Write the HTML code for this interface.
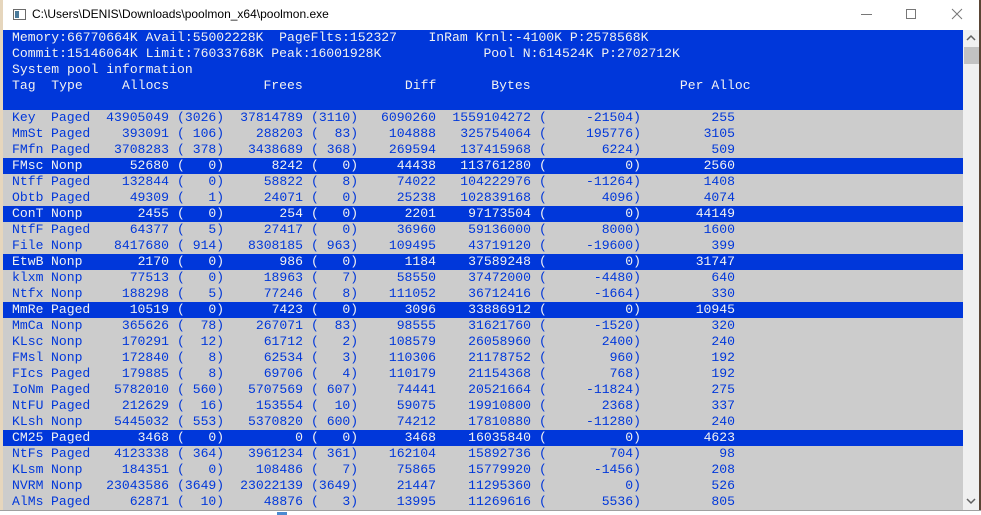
<!DOCTYPE html>
<html><head><meta charset="utf-8"><style>
*{margin:0;padding:0;box-sizing:border-box}
html,body{width:981px;height:515px;overflow:hidden;background:#f4f4f4;position:relative}
#left{position:absolute;left:0;top:0;width:3px;height:515px;background:#e6d6bd}
#rightedge{position:absolute;left:979px;top:0;width:2px;height:515px;background:#5a4535}
#title{position:absolute;left:3px;top:0;width:976px;height:30px;background:#fff}
#title .t{position:absolute;left:29px;top:7px;font:12px "Liberation Sans",sans-serif;color:#000}
#icon{position:absolute;left:10px;top:9px;width:13px;height:11px;border:1px solid #6a6a6a;background:#fff}
#icon:after{content:"";position:absolute;left:1px;top:1px;width:4px;height:7px;background:#4a7a9a}
#con{position:absolute;left:3px;top:30px;width:960px;height:480px;background:#cccccc;overflow:hidden}
.l{position:absolute;left:0;width:960px;height:16px;font:13.1px/16px "Liberation Mono",monospace;white-space:pre}
.h{background:#0037da;color:#f2f2f2}
.g{color:#0037da}
.l span{position:absolute;top:0;white-space:pre}
.l .p{left:9px}
.c1{left:48px}
.al{left:66px;width:100px;text-align:right}
.o1{left:174px}
.fr{left:200px;width:100px;text-align:right}
.o2{left:308px}
.df{left:333px;width:100px;text-align:right}
.by{left:428px;width:100px;text-align:right}
.o3{left:536px}
.vl{left:538px;width:100px;text-align:right}
.pa{left:632px;width:100px;text-align:right}
#sb{position:absolute;left:963px;top:30px;width:16px;height:480px;background:#f0f0f0}
#thumb{position:absolute;left:1px;top:17px;width:15px;height:17px;background:#c2c2c2}
#bot{position:absolute;left:0;top:510px;width:981px;height:5px;background:#fff;border-top:1px solid #a0a0a0}
</style></head><body>
<div id="left"></div>
<div id="title"><div id="icon"></div><div class="t">C:\Users\DENIS\Downloads\poolmon_x64\poolmon.exe</div>
<svg style="position:absolute;left:855px;top:8px" width="115" height="14"><line x1="3" y1="6.5" x2="14" y2="6.5" stroke="#777" stroke-width="1"/><rect x="48.5" y="1.5" width="9" height="9" fill="none" stroke="#777"/><path d="M94 1L104 11M104 1L94 11" stroke="#777" stroke-width="1"/></svg></div>
<div id="rightedge"></div>
<div id="con">
<div class="l h" style="top:0;height:80px"></div>
<div class="l h" style="top:0"><span class="p">Memory:66770664K Avail:55002228K  PageFlts:152327    InRam Krnl:-4100K P:2578568K</span></div>
<div class="l h" style="top:16px"><span class="p">Commit:15146064K Limit:76033768K Peak:16001928K             Pool N:614524K P:2702712K</span></div>
<div class="l h" style="top:32px"><span class="p">System pool information</span></div>
<div class="l h" style="top:48px"><span class="p">Tag  Type     Allocs            Frees             Diff       Bytes                   Per Alloc</span></div>
<div class="l g" style="top:80px"><span class="p">Key</span><span class="c1">Paged</span><span class="al">43905049</span><span class="o1">(3026)</span><span class="fr">37814789</span><span class="o2">(3110)</span><span class="df">6090260</span><span class="by">1559104272</span><span class="o3">(</span><span class="vl">-21504)</span><span class="pa">255</span></div>
<div class="l g" style="top:96px"><span class="p">MmSt</span><span class="c1">Paged</span><span class="al">393091</span><span class="o1">( 106)</span><span class="fr">288203</span><span class="o2">(  83)</span><span class="df">104888</span><span class="by">325754064</span><span class="o3">(</span><span class="vl">195776)</span><span class="pa">3105</span></div>
<div class="l g" style="top:112px"><span class="p">FMfn</span><span class="c1">Paged</span><span class="al">3708283</span><span class="o1">( 378)</span><span class="fr">3438689</span><span class="o2">( 368)</span><span class="df">269594</span><span class="by">137415968</span><span class="o3">(</span><span class="vl">6224)</span><span class="pa">509</span></div>
<div class="l h" style="top:128px"><span class="p">FMsc</span><span class="c1">Nonp</span><span class="al">52680</span><span class="o1">(   0)</span><span class="fr">8242</span><span class="o2">(   0)</span><span class="df">44438</span><span class="by">113761280</span><span class="o3">(</span><span class="vl">0)</span><span class="pa">2560</span></div>
<div class="l g" style="top:144px"><span class="p">Ntff</span><span class="c1">Paged</span><span class="al">132844</span><span class="o1">(   0)</span><span class="fr">58822</span><span class="o2">(   8)</span><span class="df">74022</span><span class="by">104222976</span><span class="o3">(</span><span class="vl">-11264)</span><span class="pa">1408</span></div>
<div class="l g" style="top:160px"><span class="p">Obtb</span><span class="c1">Paged</span><span class="al">49309</span><span class="o1">(   1)</span><span class="fr">24071</span><span class="o2">(   0)</span><span class="df">25238</span><span class="by">102839168</span><span class="o3">(</span><span class="vl">4096)</span><span class="pa">4074</span></div>
<div class="l h" style="top:176px"><span class="p">ConT</span><span class="c1">Nonp</span><span class="al">2455</span><span class="o1">(   0)</span><span class="fr">254</span><span class="o2">(   0)</span><span class="df">2201</span><span class="by">97173504</span><span class="o3">(</span><span class="vl">0)</span><span class="pa">44149</span></div>
<div class="l g" style="top:192px"><span class="p">NtfF</span><span class="c1">Paged</span><span class="al">64377</span><span class="o1">(   5)</span><span class="fr">27417</span><span class="o2">(   0)</span><span class="df">36960</span><span class="by">59136000</span><span class="o3">(</span><span class="vl">8000)</span><span class="pa">1600</span></div>
<div class="l g" style="top:208px"><span class="p">File</span><span class="c1">Nonp</span><span class="al">8417680</span><span class="o1">( 914)</span><span class="fr">8308185</span><span class="o2">( 963)</span><span class="df">109495</span><span class="by">43719120</span><span class="o3">(</span><span class="vl">-19600)</span><span class="pa">399</span></div>
<div class="l h" style="top:224px"><span class="p">EtwB</span><span class="c1">Nonp</span><span class="al">2170</span><span class="o1">(   0)</span><span class="fr">986</span><span class="o2">(   0)</span><span class="df">1184</span><span class="by">37589248</span><span class="o3">(</span><span class="vl">0)</span><span class="pa">31747</span></div>
<div class="l g" style="top:240px"><span class="p">klxm</span><span class="c1">Nonp</span><span class="al">77513</span><span class="o1">(   0)</span><span class="fr">18963</span><span class="o2">(   7)</span><span class="df">58550</span><span class="by">37472000</span><span class="o3">(</span><span class="vl">-4480)</span><span class="pa">640</span></div>
<div class="l g" style="top:256px"><span class="p">Ntfx</span><span class="c1">Nonp</span><span class="al">188298</span><span class="o1">(   5)</span><span class="fr">77246</span><span class="o2">(   8)</span><span class="df">111052</span><span class="by">36712416</span><span class="o3">(</span><span class="vl">-1664)</span><span class="pa">330</span></div>
<div class="l h" style="top:272px"><span class="p">MmRe</span><span class="c1">Paged</span><span class="al">10519</span><span class="o1">(   0)</span><span class="fr">7423</span><span class="o2">(   0)</span><span class="df">3096</span><span class="by">33886912</span><span class="o3">(</span><span class="vl">0)</span><span class="pa">10945</span></div>
<div class="l g" style="top:288px"><span class="p">MmCa</span><span class="c1">Nonp</span><span class="al">365626</span><span class="o1">(  78)</span><span class="fr">267071</span><span class="o2">(  83)</span><span class="df">98555</span><span class="by">31621760</span><span class="o3">(</span><span class="vl">-1520)</span><span class="pa">320</span></div>
<div class="l g" style="top:304px"><span class="p">KLsc</span><span class="c1">Nonp</span><span class="al">170291</span><span class="o1">(  12)</span><span class="fr">61712</span><span class="o2">(   2)</span><span class="df">108579</span><span class="by">26058960</span><span class="o3">(</span><span class="vl">2400)</span><span class="pa">240</span></div>
<div class="l g" style="top:320px"><span class="p">FMsl</span><span class="c1">Nonp</span><span class="al">172840</span><span class="o1">(   8)</span><span class="fr">62534</span><span class="o2">(   3)</span><span class="df">110306</span><span class="by">21178752</span><span class="o3">(</span><span class="vl">960)</span><span class="pa">192</span></div>
<div class="l g" style="top:336px"><span class="p">FIcs</span><span class="c1">Paged</span><span class="al">179885</span><span class="o1">(   8)</span><span class="fr">69706</span><span class="o2">(   4)</span><span class="df">110179</span><span class="by">21154368</span><span class="o3">(</span><span class="vl">768)</span><span class="pa">192</span></div>
<div class="l g" style="top:352px"><span class="p">IoNm</span><span class="c1">Paged</span><span class="al">5782010</span><span class="o1">( 560)</span><span class="fr">5707569</span><span class="o2">( 607)</span><span class="df">74441</span><span class="by">20521664</span><span class="o3">(</span><span class="vl">-11824)</span><span class="pa">275</span></div>
<div class="l g" style="top:368px"><span class="p">NtFU</span><span class="c1">Paged</span><span class="al">212629</span><span class="o1">(  16)</span><span class="fr">153554</span><span class="o2">(  10)</span><span class="df">59075</span><span class="by">19910800</span><span class="o3">(</span><span class="vl">2368)</span><span class="pa">337</span></div>
<div class="l g" style="top:384px"><span class="p">KLsh</span><span class="c1">Nonp</span><span class="al">5445032</span><span class="o1">( 553)</span><span class="fr">5370820</span><span class="o2">( 600)</span><span class="df">74212</span><span class="by">17810880</span><span class="o3">(</span><span class="vl">-11280)</span><span class="pa">240</span></div>
<div class="l h" style="top:400px"><span class="p">CM25</span><span class="c1">Paged</span><span class="al">3468</span><span class="o1">(   0)</span><span class="fr">0</span><span class="o2">(   0)</span><span class="df">3468</span><span class="by">16035840</span><span class="o3">(</span><span class="vl">0)</span><span class="pa">4623</span></div>
<div class="l g" style="top:416px"><span class="p">NtFs</span><span class="c1">Paged</span><span class="al">4123338</span><span class="o1">( 364)</span><span class="fr">3961234</span><span class="o2">( 361)</span><span class="df">162104</span><span class="by">15892736</span><span class="o3">(</span><span class="vl">704)</span><span class="pa">98</span></div>
<div class="l g" style="top:432px"><span class="p">KLsm</span><span class="c1">Nonp</span><span class="al">184351</span><span class="o1">(   0)</span><span class="fr">108486</span><span class="o2">(   7)</span><span class="df">75865</span><span class="by">15779920</span><span class="o3">(</span><span class="vl">-1456)</span><span class="pa">208</span></div>
<div class="l g" style="top:448px"><span class="p">NVRM</span><span class="c1">Nonp</span><span class="al">23043586</span><span class="o1">(3649)</span><span class="fr">23022139</span><span class="o2">(3649)</span><span class="df">21447</span><span class="by">11295360</span><span class="o3">(</span><span class="vl">0)</span><span class="pa">526</span></div>
<div class="l g" style="top:464px"><span class="p">AlMs</span><span class="c1">Paged</span><span class="al">62871</span><span class="o1">(  10)</span><span class="fr">48876</span><span class="o2">(   3)</span><span class="df">13995</span><span class="by">11269616</span><span class="o3">(</span><span class="vl">5536)</span><span class="pa">805</span></div>
</div>
<div id="sb"><svg style="position:absolute;left:3px;top:4px" width="10" height="8"><path d="M1 6L5 2L9 6" fill="none" stroke="#606060" stroke-width="1.5"/></svg><div id="thumb"></div><svg style="position:absolute;left:3px;top:467px" width="10" height="8"><path d="M1 2L5 6L9 2" fill="none" stroke="#606060" stroke-width="1.5"/></svg></div>
<div id="bot"><div style="position:absolute;left:277px;top:1px;width:10px;height:4px;background:#4a8ad0"></div></div>
</body></html>
